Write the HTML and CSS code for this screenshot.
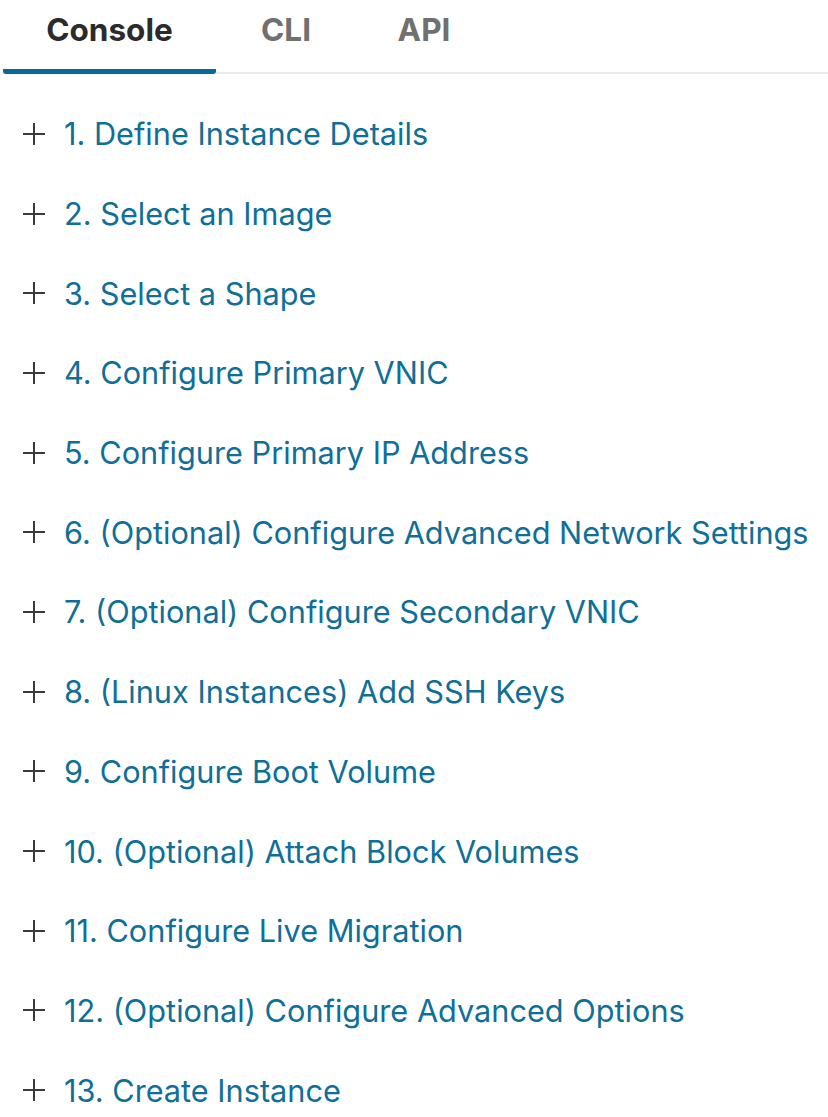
FILE: index.html
```html
<!DOCTYPE html>
<html>
<head>
<meta charset="utf-8">
<link rel="stylesheet" href="styles.css">
</head>
<body>
<div class="tabs">
  <div class="tab active">Console</div>
  <div class="tab">CLI</div>
  <div class="tab">API</div>
</div>
<ul class="steps">
  <li><span class="plus"></span><span class="label">1. Define Instance Details</span></li>
  <li><span class="plus"></span><span class="label">2. Select an Image</span></li>
  <li><span class="plus"></span><span class="label">3. Select a Shape</span></li>
  <li><span class="plus"></span><span class="label">4. Configure Primary VNIC</span></li>
  <li><span class="plus"></span><span class="label">5. Configure Primary IP Address</span></li>
  <li><span class="plus"></span><span class="label">6. (Optional) Configure Advanced Network Settings</span></li>
  <li><span class="plus"></span><span class="label">7. (Optional) Configure Secondary VNIC</span></li>
  <li><span class="plus"></span><span class="label">8. (Linux Instances) Add SSH Keys</span></li>
  <li><span class="plus"></span><span class="label">9. Configure Boot Volume</span></li>
  <li><span class="plus"></span><span class="label">10. (Optional) Attach Block Volumes</span></li>
  <li><span class="plus"></span><span class="label">11. Configure Live Migration</span></li>
  <li><span class="plus"></span><span class="label">12. (Optional) Configure Advanced Options</span></li>
  <li><span class="plus"></span><span class="label">13. Create Instance</span></li>
</ul>
</body>
</html>
```
FILE: styles.css
```css
html, body {
  margin: 0;
  padding: 0;
  background: #ffffff;
  font-family: Inter, "Liberation Sans", sans-serif;
}
.tabs {
  display: flex;
  margin-left: 3px;
  border-bottom: 2px solid #e6ebf0;
  height: 74px;
  box-sizing: border-box;
}
.tab {
  font-size: 31.5px;
  font-weight: 700;
  color: #707070;
  padding-top: 10px;
  box-sizing: border-box;
  height: 74px;
  text-align: center;
}
.tab.active {
  color: #2b2b2b;
  width: 213px;
  border-bottom: 5px solid #0a6894;
  border-radius: 0 0 3px 3px;
}
.tab:nth-child(2) { width: 140px; }
.tab:nth-child(3) { width: 136px; }
.steps {
  list-style: none;
  margin: 0;
  padding: 0 0 0 23px;
}
.steps li {
  display: flex;
  align-items: center;
  height: 79.7px;
}
.steps li:first-child { margin-top: 20px; }
.plus {
  position: relative;
  width: 22px;
  height: 22px;
  margin-right: 19px;
  flex: none;
}
.plus::before, .plus::after {
  content: "";
  position: absolute;
  background: #3a3a3a;
}
.plus::before { left: 0; right: 0; top: 10px; height: 2px; }
.plus::after { top: 0; bottom: 0; left: 10px; width: 2px; }
.label {
  font-size: 30.7px;
  color: #0f6f98;
  white-space: nowrap;
}
```
